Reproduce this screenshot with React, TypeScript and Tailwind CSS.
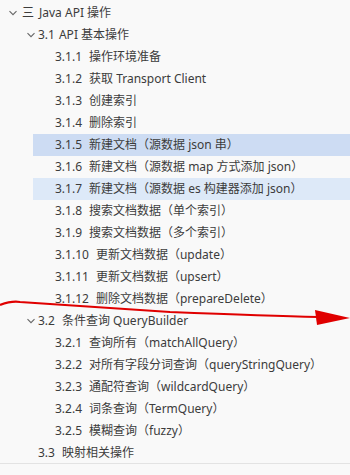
import React from "react";

type Row = { level: number; chevron?: boolean; icon?: boolean; num: string; text: string; bg?: string };

const rows: Row[] = [
  { level: 0, chevron: true, icon: true, num: "", text: "Java API 操作" },
  { level: 1, chevron: true, num: "3.1", text: "API 基本操作" },
  { level: 2, num: "3.1.1", text: "操作环境准备" },
  { level: 2, num: "3.1.2", text: "获取 Transport Client" },
  { level: 2, num: "3.1.3", text: "创建索引" },
  { level: 2, num: "3.1.4", text: "删除索引" },
  { level: 2, num: "3.1.5", text: "新建文档（源数据 json 串）", bg: "bg-[#cddcf3]" },
  { level: 2, num: "3.1.6", text: "新建文档（源数据 map 方式添加 json）" },
  { level: 2, num: "3.1.7", text: "新建文档（源数据 es 构建器添加 json）", bg: "bg-[#dde9f8]" },
  { level: 2, num: "3.1.8", text: "搜索文档数据（单个索引）" },
  { level: 2, num: "3.1.9", text: "搜索文档数据（多个索引）" },
  { level: 2, num: "3.1.10", text: "更新文档数据（update）" },
  { level: 2, num: "3.1.11", text: "更新文档数据（upsert）" },
  { level: 2, num: "3.1.12", text: "删除文档数据（prepareDelete）" },
  { level: 1, chevron: true, num: "3.2", text: "条件查询 QueryBuilder" },
  { level: 2, num: "3.2.1", text: "查询所有（matchAllQuery）" },
  { level: 2, num: "3.2.2", text: "对所有字段分词查询（queryStringQuery）" },
  { level: 2, num: "3.2.3", text: "通配符查询（wildcardQuery）" },
  { level: 2, num: "3.2.4", text: "词条查询（TermQuery）" },
  { level: 2, num: "3.2.5", text: "模糊查询（fuzzy）" },
  { level: 1, num: "3.3", text: "映射相关操作" },
];

function Chevron() {
  return (
    <svg width="10" height="10" viewBox="0 0 10 10" className="shrink-0">
      <path d="M1.5 3.2 L5 6.7 L8.5 3.2" fill="none" stroke="#666" strokeWidth="1.1" />
    </svg>
  );
}

export default function App() {
  return (
    <div
      className="relative w-[350px] h-[475px] bg-[#f9f9f9] overflow-hidden text-[#3c3c3c] text-[12px]"
      style={{ fontFamily: "'Segoe UI', 'Noto Sans', 'Noto Sans CJK SC', sans-serif" }}
    >
      <div className="pt-[2px] h-[464px] border-b border-[#e3e3e3]">
        {rows.map((r, i) => (
          <div key={i} className={`flex items-center h-[22px] whitespace-nowrap ${r.bg ?? ""} ${r.bg ? "ml-[33px] pl-[22px]" : r.level === 2 ? "pl-[55px]" : r.level === 1 ? (r.chevron ? "pl-[26px]" : "pl-[38px]") : "pl-[8px]"}`}>
            {r.chevron && <Chevron />}
            {r.icon && <span className="ml-[4px] mr-[5px]">三</span>}
            {r.level === 1 && r.chevron && <span className="w-[2px]" />}
            <span>{r.num}</span>
            {r.num && <span className={r.level === 2 || r.num === "3.2" || r.num === "3.3" ? "w-[7px]" : "w-[4px]"} />}
            <span>{r.text}</span>
          </div>
        ))}
      </div>
      <svg className="absolute left-0 top-0 pointer-events-none" width="350" height="475">
        <path d="M0 305 C 8 302, 14 301, 20 302 C 60 305, 110 308, 170 312 C 220 314, 270 316, 318 317" fill="none" stroke="#e00000" strokeWidth="2.2" />
        <path d="M315 310 L350 318 L317 325 Z" fill="#e00000" />
      </svg>
    </div>
  );
}
